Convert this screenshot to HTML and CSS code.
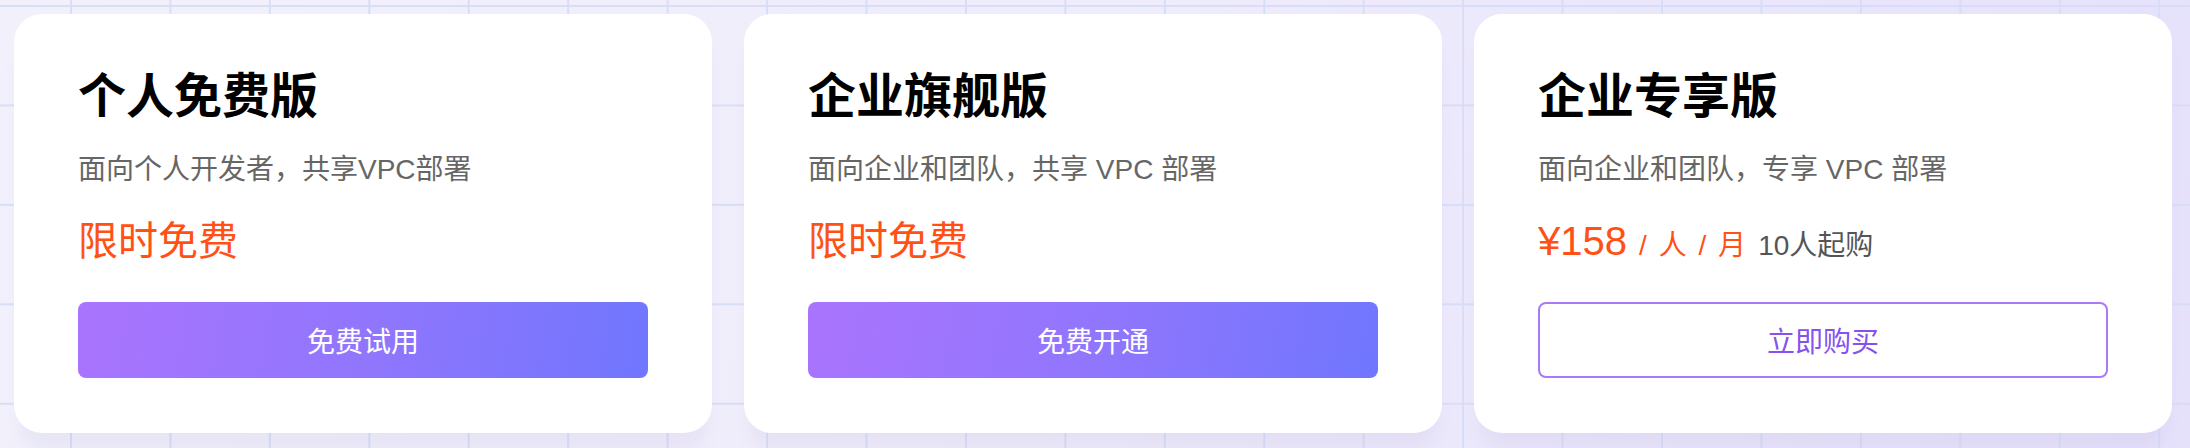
FILE: index.html
```html
<!DOCTYPE html>
<html lang="zh-CN">
<head>
<meta charset="utf-8">
<title>Pricing</title>
<link rel="stylesheet" href="styles.css">
</head>
<body>
<div class="page">
  <div class="plans">
    <div class="card">
      <h2 class="title">个人免费版</h2>
      <p class="desc">面向个人开发者，共享VPC部署</p>
      <div class="price">限时免费</div>
      <button class="btn btn-primary">免费试用</button>
    </div>
    <div class="card">
      <h2 class="title">企业旗舰版</h2>
      <p class="desc">面向企业和团队，共享 VPC 部署</p>
      <div class="price">限时免费</div>
      <button class="btn btn-primary">免费开通</button>
    </div>
    <div class="card">
      <h2 class="title">企业专享版</h2>
      <p class="desc">面向企业和团队，专享 VPC 部署</p>
      <div class="price"><span class="amount">¥158</span> <span class="unit">/ 人 / 月</span> <span class="min">10人起购</span></div>
      <button class="btn btn-outline">立即购买</button>
    </div>
  </div>
</div>
</body>
</html>
```

FILE: styles.css
```css
html, body {
  margin: 0;
  padding: 0;
}
body {
  width: 2190px;
  height: 448px;
  overflow: hidden;
  font-family: "Liberation Sans", "Noto Sans CJK SC", sans-serif;
  background-color: #f0eefb;
  background-image:
    linear-gradient(to right, rgba(214, 220, 246, 0.9) 2px, transparent 2px),
    linear-gradient(to bottom, rgba(214, 220, 246, 0.9) 2px, transparent 2px),
    linear-gradient(100deg, #f2f1fb 0%, #efecfb 50%, #e6e1fb 100%);
  background-size: 99.45px 99.45px, 99.45px 99.45px, 100% 100%;
  background-position: 70px 5px, 70px 5px, 0 0;
}
.page {
  padding: 14px 18px 0 14px;
}
.plans {
  display: flex;
  gap: 32px;
}
.card {
  flex: 0 0 698px;
  box-sizing: border-box;
  height: 419px;
  padding: 42px 64px 0 64px;
  background: #ffffff;
  border-radius: 28px;
  box-shadow: 0 22px 18px -6px rgba(110, 100, 160, 0.08);
  display: flex;
  flex-direction: column;
}
.title {
  margin: 0;
  font-family: "Noto Sans CJK SC", sans-serif;
  font-size: 48px;
  font-weight: 700;
  line-height: 72px;
  color: #000;
}
.desc {
  margin: 21px 0 0 0;
  font-size: 28px;
  line-height: 42px;
  color: #666666;
}
.price {
  margin-top: 20px;
  height: 60px;
  font-size: 40px;
  line-height: 60px;
  color: #ff5115;
  white-space: nowrap;
  word-spacing: 1px;
}
.amount {
  font-size: 40px;
}
.unit {
  font-size: 28px;
  color: #ff5115;
  word-spacing: 4px;
}
.min {
  font-size: 28px;
  color: #555555;
  word-spacing: 0;
}
.btn {
  margin-top: 31px;
  height: 76px;
  width: 100%;
  box-sizing: border-box;
  border-radius: 8px;
  font-family: "Noto Sans CJK SC", sans-serif;
  font-size: 28px;
  cursor: pointer;
}
.btn-primary {
  border: none;
  color: #ffffff;
  background: linear-gradient(100deg, #aa74fd 0%, #9176fd 50%, #7076fe 100%);
}
.btn-outline {
  border: 2px solid #a77bf6;
  color: #8652ee;
  background: #ffffff;
}
```
